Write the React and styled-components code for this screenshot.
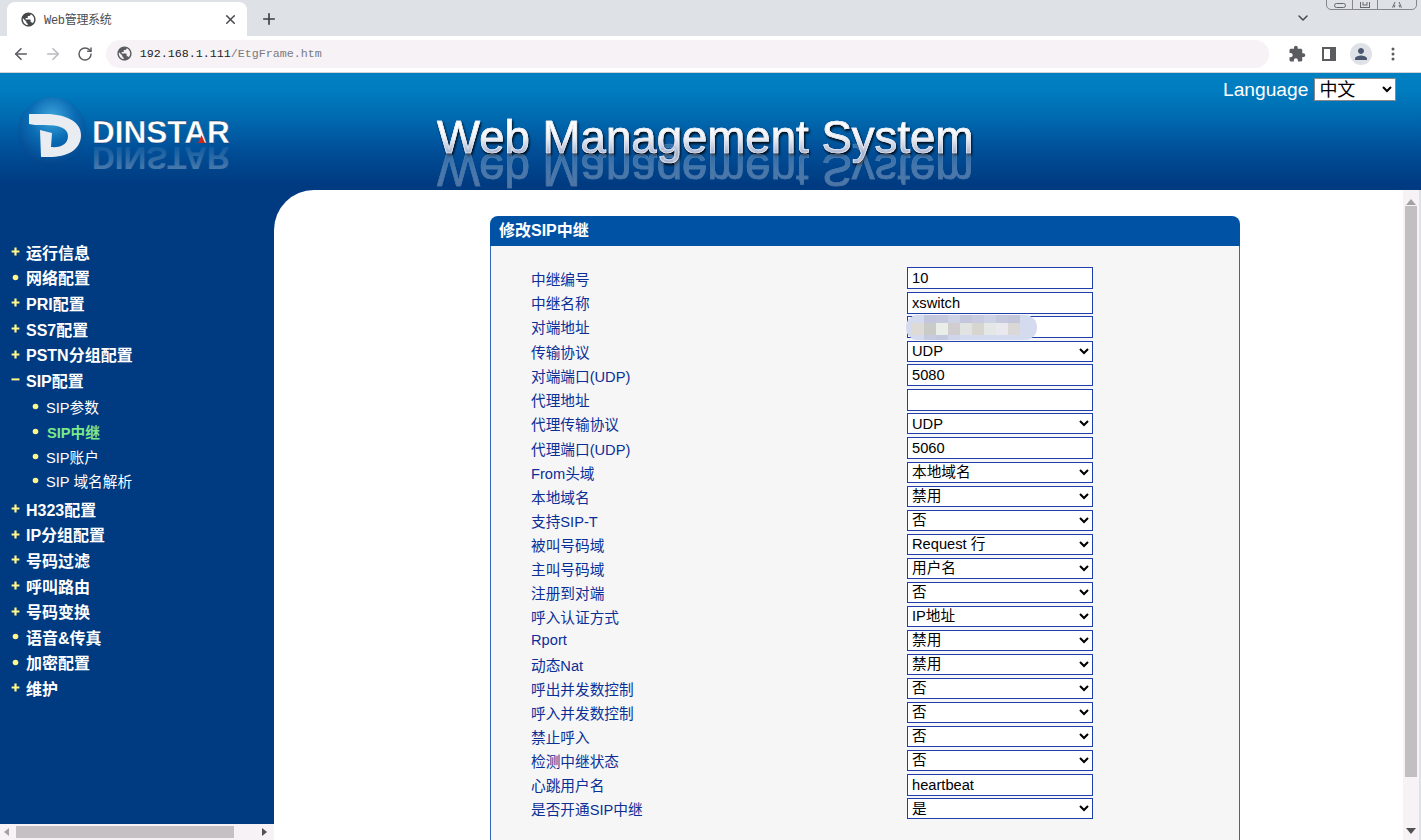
import React from "react";
import styled, { createGlobalStyle } from "styled-components";
import { ArrowLeft, ArrowRight, RotateCw, X, Plus, ChevronDown } from "lucide-react";

const GlobalStyle = createGlobalStyle`
  html, body {
    margin: 0;
    padding: 0;
    height: 840px;
    overflow: hidden;
    background: #fff;
    font-family: "Liberation Sans", "Noto Sans CJK SC", sans-serif;
  }
`;

const Page = styled.div`
  position: relative;
  width: 1421px;
  height: 840px;
  overflow: hidden;
`;

/* browser chrome */
const TabStrip = styled.div`
  height: 36px;
  background: #dee1e6;
  display: flex;
  align-items: flex-end;
  padding-left: 7px;
`;
const Tab = styled.div`
  width: 240px;
  height: 34px;
  background: #fff;
  border-radius: 8px 8px 0 0;
  display: flex;
  align-items: center;
  padding: 0 9px 0 13px;
  box-sizing: border-box;
  color: #45474a;
`;
const TabTitle = styled.span`
  flex: 1;
  margin-left: 7px;
  font: 12px "Liberation Mono", "Noto Sans CJK SC", monospace;
  letter-spacing: -0.3px;
  color: #4a4c50;
`;
const NewTab = styled.div`
  margin-left: 13px;
  height: 34px;
  display: flex;
  align-items: center;
  color: #3c4043;
`;
const StripEnd = styled.div`
  margin-left: auto;
  margin-right: 110px;
  height: 36px;
  display: flex;
  align-items: center;
  color: #45474a;
`;
const WindowControls = styled.div`
  position: absolute;
  top: -8px;
  right: 4px;
  width: 91px;
  height: 18px;
  border: 1px solid #85878a;
  border-radius: 0 0 5px 5px;
  display: grid;
  grid-template-columns: 25px 25px 1fr;
  box-sizing: border-box;
`;
const WindowButton = styled.div`
  border-left: ${(p) => (p.$first ? "none" : "1px solid #85878a")};
  display: flex;
  align-items: flex-end;
  justify-content: center;
  padding-bottom: 1px;
  color: #66686b;
`;
const Toolbar = styled.div`
  height: 37px;
  box-sizing: border-box;
  background: #fff;
  border-bottom: 1px solid #d0d2d5;
  display: flex;
  align-items: center;
  padding: 0 12px 1px 12px;
`;
const NavButton = styled.div`
  width: 18px;
  height: 18px;
  margin-right: 14px;
  display: flex;
  align-items: center;
  justify-content: center;
  color: ${(p) => (p.$off ? "#b9bbbe" : "#5a5c60")};
`;
const Omnibox = styled.div`
  width: 1172px;
  height: 28px;
  margin-left: -2px;
  border-radius: 14px;
  background: #f6f2f6;
  display: flex;
  align-items: center;
  padding-left: 10px;
  box-sizing: border-box;
  color: #5a5c60;
`;
const Url = styled.span`
  margin-left: 7px;
  font: 11.67px "Liberation Mono", monospace;
  color: #7a7a80;
`;
const Host = styled.span`
  color: #222;
`;
const ToolIcons = styled.div`
  display: flex;
  align-items: center;
  margin-left: 12px;
  color: #5a5c60;
`;
const ToolSlot = styled.div`
  width: 32px;
  height: 24px;
  display: flex;
  align-items: center;
  justify-content: center;
`;
const Avatar = styled.div`
  width: 22px;
  height: 22px;
  border-radius: 50%;
  background: #dee1e6;
  display: flex;
  align-items: center;
  justify-content: center;
  color: #4a5670;
`;

/* banner */
const Banner = styled.header`
  height: 117px;
  background: linear-gradient(#0080c2 0%, #007dc0 14%, #0068ae 40%, #004f98 66%, #003a80 96%);
  display: flex;
  align-items: flex-start;
  overflow: hidden;
`;
const Logo = styled.svg`
  width: 240px;
  height: 117px;
  margin-left: 8px;
  flex: none;
`;
const TitleBlock = styled.div`
  position: relative;
  margin: 40px 0 0 189px;
  width: 540px;
  flex: none;
`;
const Title = styled.div`
  font: 400 45.6px/50px "Liberation Sans", sans-serif;
  white-space: nowrap;
  color: #e4e8f2;
  -webkit-text-stroke: 0.7px #e8ebf4;
  background: linear-gradient(#ffffff 25%, #eef0f5 50%, #a9b6d2 80%);
  -webkit-background-clip: text;
  background-clip: text;
  -webkit-text-fill-color: transparent;
  filter: drop-shadow(1px 2px 1px rgba(0, 0, 0, 0.85));
`;
const TitleEcho = styled(Title)`
  position: absolute;
  left: 0;
  top: 31px;
  transform: scaleY(-1);
  opacity: 0.3;
  filter: none;
`;
const LanguageBox = styled.div`
  margin-left: 246px;
  margin-top: 5px;
  display: flex;
  align-items: center;
  gap: 6px;
  color: #fff;
  font-size: 19.2px;
`;
const LanguageSelect = styled.select`
  width: 82px;
  height: 23px;
  font: 18px "Liberation Sans", "Noto Sans CJK SC", sans-serif;
  border: 1px solid #8a8a8a;
  background: #fff;
  color: #000;
  padding: 0;
  border-radius: 0;
`;

/* lower part */
const Body = styled.div`
  height: 650px;
  display: flex;
  background: #003a80;
`;
const Sidebar = styled.aside`
  width: 274px;
  flex: none;
  display: flex;
  flex-direction: column;
`;
const Nav = styled.nav`
  flex: 1;
  padding-top: 49px;
`;
const NavRow = styled.div`
  height: 25.6px;
  display: flex;
  align-items: center;
  padding-left: 11px;
  color: #fff;
  font-size: 16px;
  font-weight: 700;
`;
const NavText = styled.span`
  margin-left: 6px;
`;
const SubList = styled.div`
  padding: 2px 0 3px;
`;
const SubRow = styled.div`
  height: 24.6px;
  display: flex;
  align-items: center;
  padding-left: 31px;
  font-size: 14.67px;
  font-weight: ${(p) => (p.$active ? 700 : 400)};
  color: ${(p) => (p.$active ? "#7be88a" : "#fff")};
`;
const SubText = styled.span`
  margin-left: ${(p) => (p.$active ? "7px" : "6px")};
`;
const HScroll = styled.div`
  height: 16px;
  background: #f6f2f6;
  display: flex;
  align-items: center;
  justify-content: space-between;
  padding: 0 6px 0 4px;
`;
const HThumb = styled.div`
  width: 218px;
  height: 12px;
  background: #c4c1c4;
  margin-left: 2px;
  margin-right: 24px;
`;
const Content = styled.main`
  flex: 1;
  background: #fff;
  border-top-left-radius: 40px;
  display: flex;
  overflow: hidden;
`;
const ContentInner = styled.div`
  flex: 1;
  padding: 26px 0 0 216px;
`;
const Panel = styled.section`
  width: 750px;
`;
const PanelHead = styled.h2`
  margin: 0;
  height: 30px;
  line-height: 30px;
  padding-left: 9px;
  background: #0052a5;
  border-radius: 8px 8px 0 0;
  color: #fff;
  font-size: 16px;
  font-weight: 700;
`;
const PanelBody = styled.div`
  background: #f6f6f6;
  border: 1px solid #3366bb;
  border-top: none;
  padding: 20px 0 60px 40px;
`;
const Row = styled.div`
  display: grid;
  grid-template-columns: 376px 186px;
  align-items: center;
  height: ${(p) => (p.$select ? "24px" : "24.4px")};
`;
const Label = styled.label`
  font-size: 14.67px;
  color: #0b2f96;
`;
const FieldWrap = styled.div`
  position: relative;
  height: 22px;
  display: flex;
  align-items: center;
`;
const TextField = styled.input`
  width: 186px;
  height: 22px;
  box-sizing: border-box;
  border: 1px solid #1f3fae;
  background: #fff;
  color: #000;
  padding: 0 4px;
  font: 14.67px "Liberation Sans", sans-serif;
  outline: none;
`;
const SelectField = styled.select`
  width: 186px;
  height: 21px;
  box-sizing: border-box;
  border: 1px solid #1f3fae;
  background: #fff;
  color: #000;
  padding: 0;
  border-radius: 0;
  font: 14.67px "Liberation Sans", "Noto Sans CJK SC", sans-serif;
`;
const Mosaic = styled.div`
  position: absolute;
  left: -1px;
  top: -1px;
  width: 131px;
  height: 25px;
  border-radius: 12px;
  background: #d5dbee;
  padding-left: 6px;
  box-sizing: border-box;
  display: grid;
  grid-template-columns: repeat(9, 12px);
  grid-template-rows: 8px 12px 5px;
  overflow: hidden;
`;
const VScroll = styled.div`
  width: 16px;
  margin-right: 2px;
  background: #f6f2f6;
  display: flex;
  flex-direction: column;
  align-items: center;
  position: relative;
`;
const VThumb = styled.div`
  width: 12px;
  height: 571px;
  margin-top: 16px;
  background: #c2bfc3;
`;
const ScrollEnd = styled.div`
  height: 18px;
  margin-top: auto;
  display: flex;
  align-items: center;
`;
const RightEdge = styled.div`
  width: 2px;
  background: #dee1e6;
  margin-left: -2px;
`;

const GLOBE =
  "M12 2C6.48 2 2 6.48 2 12s4.48 10 10 10 10-4.48 10-10S17.52 2 12 2zm-1 17.93c-3.95-.49-7-3.85-7-7.93 0-.62.08-1.21.21-1.79L9 15v1c0 1.1.9 2 2 2v1.93zm6.9-2.54c-.26-.81-1-1.39-1.9-1.39h-1v-3c0-.55-.45-1-1-1H8v-2h2c.55 0 1-.45 1-1V7h2c1.1 0 2-.9 2-2v-.41c2.93 1.19 5 4.06 5 7.41 0 2.08-.8 3.97-2.1 5.39z";
const PUZZLE =
  "M20.5 11H19V7c0-1.1-.9-2-2-2h-4V3.5C13 2.12 11.88 1 10.5 1S8 2.12 8 3.5V5H4c-1.1 0-1.99.9-1.99 2v3.8H3.5c1.49 0 2.7 1.21 2.7 2.7s-1.21 2.7-2.7 2.7H2V20c0 1.1.9 2 2 2h3.8v-1.5c0-1.49 1.21-2.7 2.7-2.7 1.49 0 2.7 1.21 2.7 2.7V22H17c1.1 0 2-.9 2-2v-4h1.5c1.38 0 2.5-1.12 2.5-2.5S21.88 11 20.5 11z";
const PERSON =
  "M12 12c2.21 0 4-1.79 4-4s-1.79-4-4-4-4 1.79-4 4 1.79 4 4 4zm0 2c-2.67 0-8 1.34-8 4v2h16v-2c0-2.66-5.33-4-8-4z";

const Filled = ({ d, size = 18 }) => (
  <svg width={size} height={size} viewBox="0 0 24 24" fill="currentColor">
    <path d={d} />
  </svg>
);

const Bullet = ({ kind }) => (
  <svg width="9" height="9" viewBox="0 0 9 9" style={{ flex: "none" }}>
    {kind === "plus" && <path d="M3.4 0.6h2.2v2.8h2.8v2.2H5.6v2.8H3.4V5.6H0.6V3.4h2.8z" fill="#fff78a" />}
    {kind === "minus" && <rect x="0.5" y="3.4" width="8" height="2" fill="#fff78a" />}
    {kind === "dot" && <circle cx="4.5" cy="4.5" r="2.8" fill="#fff78a" />}
  </svg>
);

const LogoMark = () => (
  <Logo viewBox="0 0 240 117">
    <defs>
      <radialGradient id="sphere" cx="0.5" cy="0.3" r="0.75">
        <stop offset="0" stopColor="#3ea6dc" />
        <stop offset="0.45" stopColor="#0a6cb4" />
        <stop offset="1" stopColor="#023f86" />
      </radialGradient>
      <linearGradient id="fade" x1="0" y1="0" x2="0" y2="1">
        <stop offset="0" stopColor="#fff" stopOpacity="0.35" />
        <stop offset="1" stopColor="#fff" stopOpacity="0" />
      </linearGradient>
    </defs>
    <circle cx="44" cy="58" r="34" fill="url(#sphere)" />
    <path
      d="M21 41l16 0c18 0 36 6 36 21s-14 22-32 22h-8l-1-27 12 3-1 14c10 1 17-3 17-11s-9-11-24-11l-9 0-6-1z"
      fill="#e9edf2"
    />
    <text x="84" y="70" fontFamily="Liberation Sans" fontWeight="700" fontSize="31.5" fill="#fff" stroke="#0b2a55" strokeWidth="0.3">
      DINSTAR
    </text>
    <polygon points="190,70 197,70 193.5,62" fill="#c8281e" />
    <text
      transform="translate(0,144) scale(1,-1)"
      x="84"
      y="70"
      fontFamily="Liberation Sans"
      fontWeight="700"
      fontSize="31.5"
      fill="url(#fade)"
      aria-hidden="true"
    >
      DINSTAR
    </text>
  </Logo>
);

const MENU_BEFORE = [
  ["plus", "运行信息"],
  ["dot", "网络配置"],
  ["plus", "PRI配置"],
  ["plus", "SS7配置"],
  ["plus", "PSTN分组配置"],
  ["minus", "SIP配置"],
];
const SUB_MENU = [
  { text: "SIP参数" },
  { text: "SIP中继", active: true },
  { text: "SIP账户" },
  { text: "SIP 域名解析" },
];
const MENU_AFTER = [
  ["plus", "H323配置"],
  ["plus", "IP分组配置"],
  ["plus", "号码过滤"],
  ["plus", "呼叫路由"],
  ["plus", "号码变换"],
  ["dot", "语音&传真"],
  ["dot", "加密配置"],
  ["plus", "维护"],
];

const FIELDS = [
  { label: "中继编号", value: "10" },
  { label: "中继名称", value: "xswitch" },
  { label: "对端地址", value: "", hidden: true },
  { label: "传输协议", select: "UDP" },
  { label: "对端端口(UDP)", value: "5080" },
  { label: "代理地址", value: "" },
  { label: "代理传输协议", select: "UDP" },
  { label: "代理端口(UDP)", value: "5060" },
  { label: "From头域", select: "本地域名" },
  { label: "本地域名", select: "禁用" },
  { label: "支持SIP-T", select: "否" },
  { label: "被叫号码域", select: "Request 行" },
  { label: "主叫号码域", select: "用户名" },
  { label: "注册到对端", select: "否" },
  { label: "呼入认证方式", select: "IP地址" },
  { label: "Rport", select: "禁用" },
  { label: "动态Nat", select: "禁用" },
  { label: "呼出并发数控制", select: "否" },
  { label: "呼入并发数控制", select: "否" },
  { label: "禁止呼入", select: "否" },
  { label: "检测中继状态", select: "否" },
  { label: "心跳用户名", value: "heartbeat" },
  { label: "是否开通SIP中继", select: "是" },
];

const MOSAIC_CELLS = [
  "#d5dbee", "#c3c6dc", "#c6c9de", "#cdd2e4", "#c4c6dc", "#c9cce0", "#cdd2e4", "#c6c8dd", "#c3c5db",
  "#dedbd7", "#c9cbc8", "#e9eee9", "#d0ccd0", "#e0e3e1", "#d6d5d0", "#e3e7e6", "#e8e8ee", "#d9d8d6",
  "#d5dbee", "#c6cbe0", "#c3c8de", "#d0d6ea", "#d5dbee", "#d5dbee", "#d5dbee", "#d5dbee", "#d5dbee",
];

export default function App() {
  return (
    <Page>
      <GlobalStyle />
      <TabStrip>
        <Tab>
          <Filled d={GLOBE} size={17} />
          <TabTitle>Web管理系统</TabTitle>
          <X size={15} strokeWidth={2.4} />
        </Tab>
        <NewTab>
          <Plus size={18} strokeWidth={2.2} />
        </NewTab>
        <StripEnd>
          <ChevronDown size={16} strokeWidth={2.2} />
        </StripEnd>
      </TabStrip>
      <WindowControls>
        <WindowButton $first>
          <svg width="12" height="5" viewBox="0 0 12 5"><rect x="0.5" y="0.5" width="11" height="4" rx="2" fill="none" stroke="currentColor" /></svg>
        </WindowButton>
        <WindowButton>
          <svg width="10" height="6" viewBox="0 0 10 6"><rect x="0.5" y="-3" width="9" height="8.5" fill="none" stroke="currentColor" /><rect x="3" y="-1" width="4" height="4" fill="none" stroke="currentColor" /></svg>
        </WindowButton>
        <WindowButton>
          <svg width="10" height="6" viewBox="0 0 10 6"><path d="M3 0l-2.5 5.5M7 0l2.5 5.5M3 3l-1 2.500M7 3l1 2.500" fill="none" stroke="currentColor" /></svg>
        </WindowButton>
      </WindowControls>
      <Toolbar>
        <NavButton><ArrowLeft size={18} strokeWidth={2.2} /></NavButton>
        <NavButton $off><ArrowRight size={18} strokeWidth={2.2} /></NavButton>
        <NavButton><RotateCw size={16} strokeWidth={2.2} /></NavButton>
        <Omnibox>
          <Filled d={GLOBE} size={17} />
          <Url><Host>192.168.1.111</Host>/EtgFrame.htm</Url>
        </Omnibox>
        <ToolIcons>
          <ToolSlot><Filled d={PUZZLE} size={18} /></ToolSlot>
          <ToolSlot>
            <svg width="14" height="14" viewBox="0 0 14 14"><path d="M0 0h14v14H0zM2 2v10h6V2z" fill="currentColor" fillRule="evenodd" /></svg>
          </ToolSlot>
          <ToolSlot>
            <Avatar><Filled d={PERSON} size={18} /></Avatar>
          </ToolSlot>
          <ToolSlot>
            <svg width="4" height="14" viewBox="0 0 4 14" fill="currentColor"><circle cx="2" cy="2" r="1.5" /><circle cx="2" cy="7" r="1.500" /><circle cx="2" cy="12" r="1.5" /></svg>
          </ToolSlot>
        </ToolIcons>
      </Toolbar>

      <Banner>
        <LogoMark />
        <TitleBlock>
          <Title>Web Management System</Title>
          <TitleEcho aria-hidden="true">Web Management System</TitleEcho>
        </TitleBlock>
        <LanguageBox>
          Language
          <LanguageSelect defaultValue="中文">
            <option>中文</option>
            <option>English</option>
          </LanguageSelect>
        </LanguageBox>
      </Banner>

      <Body>
        <Sidebar>
          <Nav>
            {MENU_BEFORE.map(([kind, text]) => (
              <NavRow key={text}>
                <Bullet kind={kind} />
                <NavText>{text}</NavText>
              </NavRow>
            ))}
            <SubList>
              {SUB_MENU.map((item) => (
                <SubRow key={item.text} $active={item.active}>
                  <Bullet kind="dot" />
                  <SubText $active={item.active}>{item.text}</SubText>
                </SubRow>
              ))}
            </SubList>
            {MENU_AFTER.map(([kind, text]) => (
              <NavRow key={text}>
                <Bullet kind={kind} />
                <NavText>{text}</NavText>
              </NavRow>
            ))}
          </Nav>
          <HScroll>
            <svg width="6" height="8" viewBox="0 0 6 8"><path d="M5 0v8L0 4z" fill="#a3a1a4" /></svg>
            <HThumb />
            <svg width="6" height="8" viewBox="0 0 6 8"><path d="M0 0v8l5-4z" fill="#505054" /></svg>
          </HScroll>
        </Sidebar>

        <Content>
          <ContentInner>
            <Panel>
              <PanelHead>修改SIP中继</PanelHead>
              <PanelBody>
                {FIELDS.map((f) => (
                  <Row key={f.label} $select={!!f.select}>
                    <Label>{f.label}</Label>
                    <FieldWrap>
                      {f.select ? (
                        <SelectField defaultValue={f.select}>
                          <option>{f.select}</option>
                        </SelectField>
                      ) : (
                        <TextField defaultValue={f.value} />
                      )}
                      {f.hidden && (
                        <Mosaic>
                          {MOSAIC_CELLS.map((c, i) => (
                            <div key={i} style={{ background: c }} />
                          ))}
                        </Mosaic>
                      )}
                    </FieldWrap>
                  </Row>
                ))}
              </PanelBody>
            </Panel>
          </ContentInner>
          <VScroll>
            <ScrollEnd style={{ marginTop: 0, position: "absolute", top: 3 }}>
              <svg width="10" height="6" viewBox="0 0 10 6"><path d="M0 6h10L5 0z" fill="#a3a1a4" /></svg>
            </ScrollEnd>
            <VThumb />
            <ScrollEnd>
              <svg width="10" height="6" viewBox="0 0 10 6"><path d="M0 0h10L5 6z" fill="#505054" /></svg>
            </ScrollEnd>
          </VScroll>
          <RightEdge />
        </Content>
      </Body>
    </Page>
  );
}
